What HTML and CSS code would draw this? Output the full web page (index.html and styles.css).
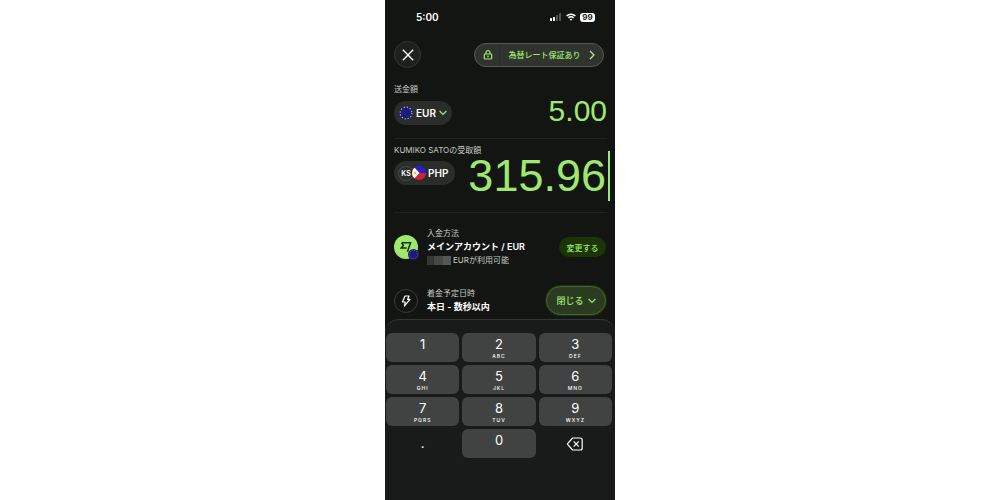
FILE: index.html
```html
<!DOCTYPE html>
<html lang="ja">
<head>
    <meta charset="UTF-8">
    <meta name="viewport" content="width=device-width, initial-scale=1.0">
    <title>送金</title>
    <link rel="stylesheet" href="styles.css">
</head>
<body>
    <main class="phone">
        <div class="status">
            <span class="time">5:00</span>
            <div class="status-icons">
                <svg width="12" height="8" viewBox="0 0 12 8">
                    <rect x="0" y="5" width="2" height="3" rx=".6" fill="#fff"/>
                    <rect x="3" y="4" width="2" height="4" rx=".6" fill="#fff"/>
                    <rect x="6" y="2" width="2" height="6" rx=".6" fill="#555"/>
                    <rect x="9" y="0" width="2" height="8" rx=".6" fill="#555"/>
                </svg>
                <svg width="10" height="8" viewBox="0 0 10 8" fill="none" stroke="#fff" stroke-width="1.5">
                    <path d="M.6 3a6.2 6.2 0 0 1 8.800 0M2.400 4.900a3.700 3.700 0 0 1 5.200 0"/>
                    <path d="M5 7.800 3.700 6.400a1.900 1.900 0 0 1 2.600 0z" fill="#fff" stroke="none"/>
                </svg>
                <span class="battery">99</span>
            </div>
        </div>

        <header class="header">
            <button class="close" aria-label="閉じる">
                <svg width="12" height="12" viewBox="0 0 12 12" fill="none" stroke="#fff" stroke-width="1.400"><path d="m.8.8 10.400 10.400M11.200.8.8 11.200"/></svg>
            </button>
            <button class="rate">
                <svg width="10" height="10" viewBox="0 0 10 10" fill="none" stroke="#9fe870" stroke-width="1.200"><rect x="1.300" y="4" width="7.400" height="5" rx=".8"/><path d="M3 4V2.600a2 2 0 0 1 4 0V4M5 5.600v1.800"/></svg>
                <span class="rate-text">為替レート保証あり</span>
                <svg width="6" height="10" viewBox="0 0 6 10" fill="none" stroke="#c0e8a8" stroke-width="1.200"><path d="m1 1 4 4-4 4"/></svg>
            </button>
        </header>

        <section class="money">
            <div class="side">
                <label class="label" for="sendAmount">送金額</label>
                <div class="pill">
                    <svg width="14" height="14" viewBox="0 0 14 14">
                        <circle cx="7" cy="7" r="7" fill="#1c1b78"/>
                        <circle cx="7" cy="7" r="5.900" fill="none" stroke="#d8c3a0" stroke-width="1.200" stroke-dasharray="1.200 1.889"/>
                    </svg>
                    <select class="currency" aria-label="通貨"><option>EUR</option></select>
                    <svg width="8" height="6" viewBox="0 0 8 6" fill="none" stroke="#9fe870" stroke-width="1.300"><path d="m.6 1 3.400 3.400L7.400 1"/></svg>
                </div>
            </div>
            <input class="amount" id="sendAmount" type="text" value="5.00">
        </section>

        <section class="money receive">
            <div class="side">
                <label class="label" for="receiveAmount">KUMIKO SATOの受取額</label>
                <button class="pill recipient">
                    <span class="initials">KS</span>
                    <svg class="flag" width="14" height="14" viewBox="0 0 14 14">
                        <clipPath id="round"><circle cx="7" cy="7" r="7"/></clipPath>
                        <g clip-path="url(#round)">
                            <path d="M0 0h14v7H0z" fill="#2721cc"/>
                            <path d="M0 7h14v7H0z" fill="#d51f35"/>
                            <path d="M0-1v16l7.500-8z" fill="#fff"/>
                            <circle cx="3" cy="7" r="1.600" fill="#f2bd3a"/>
                        </g>
                    </svg>
                    <span>PHP</span>
                </button>
            </div>
            <input class="amount active" id="receiveAmount" type="text" value="315.96">
        </section>

        <section class="row">
            <div class="account">
                <svg width="12" height="12" viewBox="0 0 12 12" fill="none" stroke="#173309" stroke-width="1.500"><path d="M1.600 1.800h9L7.400 10.800M1.600 1.800l1.800 2.600L1.200 7h5.400"/></svg>
                <svg class="badge" width="11" height="11" viewBox="0 0 11 11">
                    <circle cx="5.500" cy="5.500" r="5.500" fill="#1c1b78"/>
                    <circle cx="5.500" cy="5.500" r="4.200" fill="none" stroke="#8c7e76" stroke-width=".8" stroke-dasharray=".8 1.399"/>
                </svg>
            </div>
            <div class="details">
                <span class="label">入金方法</span>
                <strong>メインアカウント / EUR</strong>
                <span class="label balance"><i class="hidden-sum"></i>EURが利用可能</span>
            </div>
            <button class="change">変更する</button>
        </section>

        <section class="row arrival">
            <div class="bolt">
                <svg width="12" height="12" viewBox="0 0 12 12" fill="none" stroke="#fff" stroke-width="1.200" stroke-linejoin="round"><path d="M5 1h4L7.600 4.400H10L4.400 11l.8-4H2.400z"/></svg>
            </div>
            <div class="details">
                <span class="label">着金予定日時</span>
                <strong>本日 - 数秒以内</strong>
            </div>
            <button class="done">閉じる
                <svg width="8" height="6" viewBox="0 0 8 6" fill="none" stroke="#9fe870" stroke-width="1.200"><path d="m.6 1 3.400 3.400L7.400 1"/></svg>
            </button>
        </section>

        <div class="keyboard">
            <button class="key">1</button>
            <button class="key">2<small>ABC</small></button>
            <button class="key">3<small>DEF</small></button>
            <button class="key">4<small>GHI</small></button>
            <button class="key">5<small>JKL</small></button>
            <button class="key">6<small>MNO</small></button>
            <button class="key">7<small>PQRS</small></button>
            <button class="key">8<small>TUV</small></button>
            <button class="key">9<small>WXYZ</small></button>
            <button class="key plain">.</button>
            <button class="key">0</button>
            <button class="key plain" aria-label="削除">
                <svg width="16" height="14" viewBox="0 0 16 14" fill="none" stroke="#fff" stroke-width="1.200" stroke-linejoin="round"><path d="M5.600 1h7.600a2 2 0 0 1 2 2v8a2 2 0 0 1-2 2H5.600L.8 7.600a.8.8 0 0 1 0-1.200zM6.600 4.400l5.200 5.200M11.800 4.400 6.600 9.600"/></svg>
            </button>
        </div>
    </main>
</body>
</html>
```
FILE: styles.css
```css
* {
    box-sizing: border-box;
}
body {
    margin: 0;
    background-color: #fff;
    font-family: Inter, "Noto Sans CJK JP", sans-serif;
    color: #fff;
}
button, input, select {
    font-family: inherit;
    color: inherit;
    border: 0;
    padding: 0;
    margin: 0;
    background: none;
}
svg {
    display: block;
    flex: none;
}
.phone {
    display: flex;
    flex-direction: column;
    width: 23%;
    min-width: 230px;
    min-height: 100vh;
    margin: 0 auto;
    background-color: #131512;
}
.status {
    display: flex;
    align-items: center;
    justify-content: space-between;
    height: 34px;
    padding: 0 20px 0 31px;
}
.time {
    font-size: 10px;
    font-weight: 600;
}
.status-icons {
    display: flex;
    align-items: center;
    gap: 4px;
}
.battery {
    width: 15px;
    border-radius: 3px;
    background-color: #fff;
    color: #222;
    font-size: 8px;
    font-weight: 700;
    line-height: 9px;
    text-align: center;
}
.header {
    display: flex;
    align-items: center;
    justify-content: space-between;
    padding: 7px 11px 0 9px;
}
.close {
    display: grid;
    place-items: center;
    width: 27px;
    height: 27px;
    border: 1px solid #353735;
    border-radius: 50%;
    background-color: #1e201e;
}
.rate {
    display: flex;
    align-items: center;
    width: 130px;
    height: 24px;
    padding: 0 8px;
    border: 1px solid #555853;
    border-radius: 12px;
    background-color: #30332e;
    color: #9fe870;
    font-size: 8px;
    font-weight: 500;
}
.rate-text {
    flex: 1;
    margin-left: 6px;
    border-left: 1px solid #292c28;
    line-height: 22px;
}
.money {
    display: flex;
    align-items: flex-start;
    justify-content: space-between;
    margin: 15px 8px 0 9px;
    padding-bottom: 10px;
    border-bottom: 1px solid #20231f;
}
.side {
    display: flex;
    flex-direction: column;
    align-items: flex-start;
    gap: 5px;
    flex: none;
    width: 72px;
    white-space: nowrap;
}
.label {
    color: #c8cac7;
    font-size: 8px;
    line-height: 13px;
}
.pill {
    display: flex;
    align-items: center;
    gap: 3px;
    height: 24px;
    padding: 0 5px;
    border-radius: 12px;
    background-color: #2b2d2a;
    font-size: 10px;
    font-weight: 600;
}
.currency {
    appearance: none;
    font-size: 10px;
    font-weight: 600;
}
.recipient {
    gap: 2px;
    padding: 0 7px 0 5px;
}
.initials {
    width: 14px;
    border-radius: 50%;
    box-shadow: 0 0 0 1px #454744;
    font-size: 7px;
    line-height: 13px;
    text-align: center;
}
.flag {
    margin-left: -3px;
}
.amount {
    flex: 1;
    min-width: 0;
    height: 34px;
    margin-top: 11px;
    color: #9fe870;
    font-family: "Liberation Sans", Arial, sans-serif;
    font-size: 30px;
    text-align: right;
    outline: none;
}
.receive {
    margin-top: 5px;
    padding-bottom: 11px;
}
.receive .side {
    gap: 4px;
}
.receive .active {
    height: 50px;
    margin: 7px -3px 0 0;
    padding-right: 2px;
    border-right: 2px solid #9fe870;
    font-size: 45px;
}
.row {
    display: flex;
    align-items: center;
    gap: 9px;
    padding: 14px 9px 0;
}
.account, .bolt {
    position: relative;
    display: grid;
    place-items: center;
    width: 24px;
    height: 24px;
    border-radius: 50%;
}
.account {
    background-color: #9fe870;
}
.badge {
    position: absolute;
    right: -1px;
    bottom: -1px;
}
.bolt {
    border: 1px solid #3a3c39;
}
.details {
    display: flex;
    flex: 1;
    flex-direction: column;
    white-space: nowrap;
}
.details strong {
    font-size: 9px;
    font-weight: 600;
    line-height: 14px;
}
.balance {
    display: flex;
    align-items: center;
    gap: 2px;
}
.hidden-sum {
    width: 24px;
    height: 9px;
    background: linear-gradient(90deg, #353735 30%, #464846 30% 65%, #555755 65%);
}
.change {
    width: 47px;
    height: 20px;
    border-radius: 10px;
    background-color: #1b3507;
    color: #9fe870;
    font-size: 8px;
    font-weight: 500;
}
.arrival {
    padding-top: 19px;
}
.done {
    display: flex;
    align-items: center;
    justify-content: center;
    gap: 4px;
    width: 60px;
    height: 29px;
    border: 1px solid #4d5e42;
    border-radius: 15px;
    background-color: #2a3b20;
    box-shadow: 0 0 0 1px #1b3507;
    color: #9fe870;
    font-size: 9px;
    font-weight: 500;
}
.keyboard {
    display: grid;
    grid-template-columns: repeat(3, 1fr);
    grid-auto-rows: 29px;
    gap: 3px;
    flex: 1;
    margin-top: 4px;
    padding: 13px 3px 43px 1px;
    border-top: 1px solid #343634;
    border-radius: 14px 14px 0 0;
    background-color: #191b1a;
}
.key {
    display: flex;
    flex-direction: column;
    align-items: center;
    padding-top: 4px;
    border-radius: 6px;
    background-color: #414342;
    font-size: 13px;
    line-height: 15px;
}
.key small {
    font-size: 5px;
    font-weight: 500;
    line-height: 8px;
    letter-spacing: 1px;
}
.plain {
    justify-content: center;
    padding-top: 0;
    background: none;
}
```
